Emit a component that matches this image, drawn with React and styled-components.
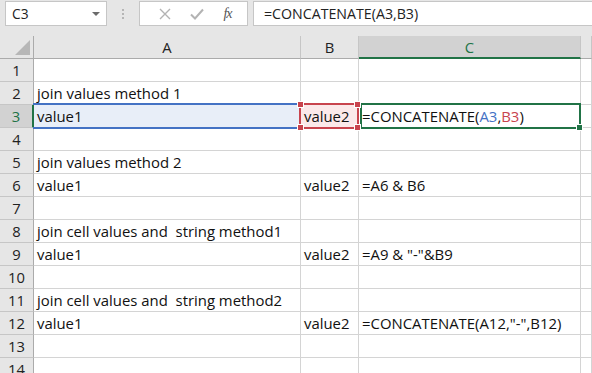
import React from "react";
import styled, { createGlobalStyle, css } from "styled-components";

const Global = createGlobalStyle`
  html, body { margin: 0; padding: 0; background: #fff; }
  body { font-family: "Open Sans", "Noto Sans", sans-serif; }
`;

const Frame = styled.div`
  width: 592px;
  height: 373px;
  overflow: hidden;
  background: #e6e6e6;
  display: flex;
  flex-direction: column;
`;

const Bar = styled.div`
  height: 36px;
  flex: none;
  display: flex;
  align-items: flex-start;
  padding-top: 1px;
  box-sizing: border-box;
`;

const NameBox = styled.div`
  margin-left: 5px;
  width: 102px;
  height: 25px;
  box-sizing: border-box;
  background: #fff;
  border: 1px solid #c6c6c6;
  display: flex;
  align-items: center;
  justify-content: space-between;
  padding: 0 6px 0 6px;
  font-family: "Open Sans", sans-serif;
  font-size: 13.8px;
  color: #222;
`;

const Caret = styled.span`
  width: 0;
  height: 0;
  border-left: 4px solid transparent;
  border-right: 4px solid transparent;
  border-top: 4px solid #6b6b6b;
`;

const Dots = styled.div`
  width: 32px;
  height: 25px;
  display: flex;
  flex-direction: column;
  align-items: center;
  justify-content: center;
  gap: 2px;
  & > span {
    width: 2px;
    height: 2px;
    background: #b5b5b5;
  }
`;

const IconBox = styled.div`
  width: 109px;
  height: 25px;
  box-sizing: border-box;
  background: #fff;
  border: 1px solid #c6c6c6;
  display: flex;
  align-items: center;
  justify-content: space-around;
  padding: 0 6px 0 10px;
`;

const Fx = styled.span`
  font-family: "Liberation Serif", serif;
  font-style: italic;
  font-size: 14px;
  color: #555;
  letter-spacing: -1px;
`;

const FormulaInput = styled.div`
  margin-left: 5px;
  flex: 1;
  height: 25px;
  box-sizing: border-box;
  background: #fff;
  border: 1px solid #c6c6c6;
  border-right: none;
  display: flex;
  align-items: center;
  padding-left: 10px;
  font-family: "Open Sans", sans-serif;
  font-size: 14.2px;
  color: #222;
`;

const Sheet = styled.div`
  display: grid;
  grid-template-columns: 34px 267px 58px 222px 1fr;
  grid-template-rows: repeat(15, 23px);
  background: #fff;
`;

const Corner = styled.div`
  background: #e6e6e6;
  border-right: 1px solid #ababab;
  border-bottom: 1px solid #ababab;
  box-sizing: border-box;
  position: relative;
  &::after {
    content: "";
    position: absolute;
    right: 3px;
    bottom: 3px;
    width: 0;
    height: 0;
    border-left: 15px solid transparent;
    border-bottom: 15px solid #b7b7b7;
  }
`;

const ColHead = styled.div`
  box-sizing: border-box;
  background: ${(p) => (p.$active ? "#d2d2d2" : "#e6e6e6")};
  border-right: 1px solid #c6c6c6;
  border-bottom: ${(p) => (p.$active ? "2px solid #217346" : "1px solid #ababab")};
  display: flex;
  align-items: center;
  justify-content: center;
  padding-top: ${(p) => (p.$active ? "1px" : "0")};
  font-family: "Open Sans", sans-serif;
  font-size: 14.8px;
  color: ${(p) => (p.$active ? "#217346" : "#222")};
`;

const RowHead = styled.div`
  box-sizing: border-box;
  background: ${(p) => (p.$active ? "#d2d2d2" : "#e6e6e6")};
  border-right: ${(p) => (p.$active ? "2px solid #217346" : "1px solid #ababab")};
  border-bottom: 1px solid #c6c6c6;
  display: flex;
  align-items: flex-end;
  justify-content: center;
  padding-bottom: 1px;
  font-family: "Open Sans", sans-serif;
  font-size: 14.8px;
  color: ${(p) => (p.$active ? "#217346" : "#222")};
`;

const Cell = styled.div`
  position: relative;
  box-sizing: border-box;
  border-right: 1px solid #d4d4d4;
  border-bottom: 1px solid #d4d4d4;
  display: flex;
  align-items: flex-end;
  padding: 0 0 1px 3px;
  white-space: pre;
  overflow: visible;
  font-family: "Open Sans", sans-serif;
  font-size: 14.9px;
  color: #111;
  background: ${(p) => p.$fill || "transparent"};
  z-index: ${(p) => (p.$z ? p.$z : "auto")};
`;

const Frameline = styled.div`
  position: absolute;
  left: ${(p) => p.$l}px;
  top: -2px;
  right: ${(p) => p.$r}px;
  bottom: -2px;
  border: 2px solid ${(p) => p.$color};
  pointer-events: none;
  ${(p) =>
    p.$noLeft &&
    css`
      border-left: none;
    `}
`;

const Handle = styled.span`
  position: absolute;
  width: 5px;
  height: 5px;
  background: ${(p) => p.$color};
  border: 1px solid #fff;
  ${(p) => (p.$top ? "top: -4px;" : "bottom: -4px;")}
  ${(p) => (p.$left ? "left: -4px;" : "right: -4px;")}
`;

const Ref = styled.span`
  color: ${(p) => p.$c};
`;

const rows = [
  ["", "", ""],
  ["join values method 1", "", ""],
  ["value1", "value2", "formula"],
  ["", "", ""],
  ["join values method 2", "", ""],
  ["value1", "value2", "=A6 & B6"],
  ["", "", ""],
  ["join cell values and  string method1", "", ""],
  ["value1", "value2", '=A9 & "-"&B9'],
  ["", "", ""],
  ["join cell values and  string method2", "", ""],
  ["value1", "value2", '=CONCATENATE(A12,"-",B12)'],
  ["", "", ""],
  ["", "", ""],
];

const BLUE = "#4472c4";
const RED = "#c8444e";
const GREEN = "#217346";

export default function App() {
  return (
    <>
      <Global />
      <Frame>
        <Bar>
          <NameBox>
            <span>C3</span>
            <Caret />
          </NameBox>
          <Dots>
            <span />
            <span />
            <span />
          </Dots>
          <IconBox>
            <svg width="12" height="12" viewBox="0 0 12 12">
              <path d="M1 1 L11 11 M11 1 L1 11" stroke="#b3b3b3" strokeWidth="1.4" fill="none" />
            </svg>
            <svg width="14" height="12" viewBox="0 0 14 12">
              <path d="M1 6.5 L5 10.5 L13 1.5" stroke="#b3b3b3" strokeWidth="2" fill="none" />
            </svg>
            <Fx>fx</Fx>
          </IconBox>
          <FormulaInput>=CONCATENATE(A3,B3)</FormulaInput>
        </Bar>
        <Sheet>
          <Corner />
          <ColHead>A</ColHead>
          <ColHead>B</ColHead>
          <ColHead $active>C</ColHead>
          <ColHead />
          {rows.map((r, i) => {
            const n = i + 1;
            const sel = n === 3;
            return (
              <React.Fragment key={n}>
                <RowHead $active={sel}>{n}</RowHead>
                <Cell $fill={sel ? "#e8eef8" : undefined}>
                  {sel && <Frameline $color={BLUE} $l={-1} $r={-1} $noLeft />}
                  {r[0]}
                </Cell>
                <Cell $fill={sel ? "#fbe9ea" : undefined} $z={sel ? 2 : undefined}>
                  {sel && (
                    <Frameline $color={RED} $l={-2} $r={-1}>
                      <Handle $color={RED} $top $left />
                      <Handle $color={RED} $top />
                      <Handle $color={RED} $left />
                      <Handle $color={RED} />
                    </Frameline>
                  )}
                  {r[1]}
                </Cell>
                <Cell $z={sel ? 1 : undefined}>
                  {sel && (
                    <Frameline $color={GREEN} $l={1} $r={-1}>
                      <Handle $color={GREEN} />
                    </Frameline>
                  )}
                  {sel ? (
                    <span>
                      =CONCATENATE(<Ref $c={BLUE}>A3</Ref>,<Ref $c={RED}>B3</Ref>)
                    </span>
                  ) : (
                    r[2]
                  )}
                </Cell>
                <Cell />
              </React.Fragment>
            );
          })}
        </Sheet>
      </Frame>
    </>
  );
}
